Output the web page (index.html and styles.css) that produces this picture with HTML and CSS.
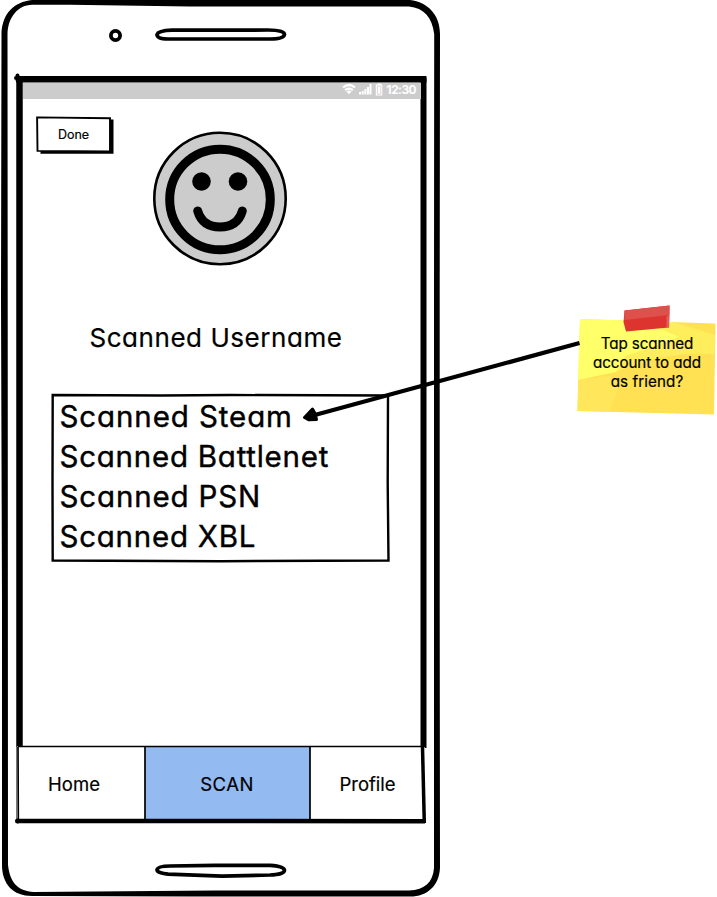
FILE: index.html
```html
<!DOCTYPE html>
<html lang="en">
<head>
<meta charset="utf-8">
<title>Scanned user wireframe</title>
<link rel="stylesheet" href="styles.css">
</head>
<body>
<main class="canvas">
  <section class="phone">
    <svg class="sketch" width="444" height="897" viewBox="0 0 444 897" aria-hidden="true">
      <path fill="#000" fill-rule="evenodd" d="M32 0H410C428 2 440 15 440 34L439.700 300V600L440 868C439 886 427 897 409 896.500H190L32 896C13 896 2 884 2 865V600L1 300L1.500 32C3 13 14 2 32 0ZM32 4.700C18 5 8 17 7.500 34L7.700 300L8 865C10 882 17 891 34 892L215 890.500H409C425 890 433 882 434 868V300L434.200 34C432 17 424 8 409 6.500H190L70 4.800Z"/>
      <ellipse cx="115.500" cy="35.500" rx="4.600" ry="4.600" fill="#fff" stroke="#000" stroke-width="3.800"/>
      <path fill="#fff" stroke="#000" stroke-width="3.700" d="M172 30.200L268 30C280 30 284.500 32 284.500 34.500C284 37.500 279 39 270 39H168C160 39 157 37 157 34.500C158 31.500 164 30.500 172 30.200Z"/>
      <path fill="#fff" stroke="#000" stroke-width="3.700" d="M170 866L215 865.300H270C281 866 284.500 868 284.500 870.500C284 873.500 279 874.500 270 875L222 876.200L168 874.200C160 873 157 872 157 869.500C158 866.500 164 866 170 866Z"/>
      <path fill="none" stroke="#000" stroke-width="6.500" d="M16 79.200H426.500"/>
      <path fill="none" stroke="#000" stroke-width="6.500" d="M19.500 76V748"/>
      <path fill="none" stroke="#000" stroke-width="6" d="M423.500 78V748"/>
      <path fill="none" stroke="#000" stroke-width="4" stroke-linecap="round" d="M17.500 75.500V80M16 78H19"/>
    </svg>
    <div class="screen">
      <div class="status">
        <svg width="42" height="14" viewBox="0 0 42 14" aria-hidden="true">
          <g fill="none" stroke="#fff" stroke-width="2.200"><path d="M1 4.500Q7 -.5 13 4.500M3.200 7.200Q7 4 10.800 7.200"/></g>
          <path fill="#fff" d="M4.500 8.500Q7 6.500 9.500 8.500L7 11.200Z"/>
          <path fill="#fff" d="M17 9h2v2.500h-2zM19.700 8h2v3.500h-2zM22.400 6h2v5.500h-2zM25 4h2v7.500h-2zM27.500 1h2v10.500h-2z"/>
          <path fill="#fff" d="M35.800 .5h3v1h1.500v11h-6.500v-11h2z"/><path fill="none" stroke="#c9b7b5" stroke-width=".6" d="M35.400 3h3.400v8.300h-3.400z"/>
        </svg>
        <span>12:30</span>
      </div>
      <div class="profile">
        <button class="done">
          <svg class="sketch" width="80" height="42" viewBox="0 0 80 42" aria-hidden="true"><path d="M4.500 34.800H75.500V2.500" fill="none" stroke="#000" stroke-width="4"/><path d="M1.100 .4L74 1.200V34.400L1.500 33.900Z" fill="#fff" stroke="#000" stroke-width="1.900"/></svg>
          <span>Done</span>
        </button>
        <svg class="avatar" width="134" height="134" viewBox="0 0 134 134" aria-hidden="true">
          <circle cx="67" cy="66.500" r="65.700" fill="#ccc" stroke="#000" stroke-width="2.600"/>
          <circle cx="67" cy="67.500" r="50.300" fill="none" stroke="#000" stroke-width="9"/>
          <circle cx="48.500" cy="49.500" r="9.300"/><circle cx="85" cy="49.500" r="9.300"/>
          <path d="M44.700 79C48 90 56 95 67 95S86 90 89.300 79" fill="none" stroke="#000" stroke-width="9" stroke-linecap="round"/>
        </svg>
        <h1 class="username">Scanned Username</h1>
        <div class="accounts">
          <svg class="sketch" width="340" height="170" viewBox="0 0 340 170" aria-hidden="true"><path d="M1.700 2L110 2.500L180 2L337 2.500L336.700 90L337.500 167.500L170 168.200L1.700 167.500L1.500 90Z" fill="#fff" stroke="#000" stroke-width="2.400"/></svg>
          <ul>
            <li class="steam">Scanned Steam</li>
            <li>Scanned Battlenet</li>
            <li class="psn">Scanned PSN</li>
            <li>Scanned XBL</li>
          </ul>
        </div>
      </div>
      <nav class="tabs">
        <svg class="sketch" width="412" height="80" viewBox="0 0 412 80" aria-hidden="true">
          <path d="M1 1L129 2V75L1 74Z" fill="#fff"/><path d="M294 2H409V75H294Z" fill="#fff"/>
          <path d="M129 2H294V76H129Z" fill="#94baf2"/>
          <path d="M1.500 1.500H409M129 2V74M294 2V76M2 2L2.300 76" fill="none" stroke="#000" stroke-width="1.700"/>
          <path d="M.5 2V76" fill="none" stroke="#777" stroke-width="1"/>
          <path d="M1 76H130L409 76.300" fill="none" stroke="#000" stroke-width="4.500"/>
          <path d="M406.500 2L408.300 78" fill="none" stroke="#000" stroke-width="3.500"/>
          <circle cx="1.500" cy="76" r="2.500"/>
        </svg>
        <span class="home">Home</span><span class="scan">SCAN</span><span class="me">Profile</span>
      </nav>
    </div>
  </section>
  <aside class="note">
    <svg class="sketch" width="142" height="114" viewBox="0 0 142 114" aria-hidden="true">
      <path d="M5 14L140.500 18.500L139 109.500L2.500 106Z" fill="#ffe153"/>
      <path d="M5 14L98 17L86 24L105 32L75 43L51 51L41 67L3 75Z" fill="#ffff6a"/>
      <path d="M98 17L86 24L105 32L75 43L51 51L41 67Q92 45 139.500 49L140 30Z" fill="#ffee5c"/>
      <path d="M3 75L35 71L45 77L35 106.500L2.500 106Z" fill="#ffe65a"/>
      <path d="M49.500 5.500L94.500 .5L94 22.500L51 26.500L48.500 17Z" fill="#dd3430"/>
      <path d="M49.500 5.500L94.500 .5V10L49.500 15Z" fill="#dd504b"/>
      <path d="M91.500 11L94.500 10.500L94 22.500L91.500 22Z" fill="#e75a55"/>
    </svg>
    <p><span class="n1">Tap scanned</span><br><span class="n2">account to add</span><br><span class="n3">as friend?</span></p>
  </aside>
  <svg class="arrow" width="282" height="84" viewBox="0 0 282 84" aria-hidden="true">
    <path d="M279.500 3L13 75.500" fill="none" stroke="#000" stroke-width="4.200"/>
    <path d="M4.500 77.500L12.500 69L14.800 73L16.500 79.500L9 79.800Z" stroke="#000" stroke-width="3" stroke-linejoin="round"/>
  </svg>
</main>
</body>
</html>
```

FILE: styles.css
```css
* { box-sizing: border-box; }
body { margin: 0; background: #fff; }
svg { overflow: visible; }
.canvas {
  position: relative;
  display: flex;
  align-items: flex-start;
  width: 717px;
  height: 897px;
  overflow: hidden;
  color: #000;
  font-family: Inter, "Open Sans", sans-serif;
  font-feature-settings: "cv11" 1, "calt" 0;
  -webkit-text-stroke: .2px currentColor;
}
.sketch { position: absolute; left: 0; top: 0; z-index: -1; }
.phone { position: relative; z-index: 0; width: 444px; height: 897px; padding: 83px 0 0 16px; }
.screen { display: flex; flex-direction: column; width: 412px; height: 742px; }
.status {
  display: flex;
  align-items: flex-start;
  justify-content: flex-end;
  gap: 3px;
  height: 16px;
  margin: 0 7.500px 0 7px;
  padding-right: 4.500px;
  background: #ccc;
  color: #fff;
  font-size: 12px;
  line-height: 14px;
  font-weight: 600;
  letter-spacing: -.5px;
}
.profile { flex: 1; display: flex; flex-direction: column; align-items: center; }
.done {
  position: relative;
  z-index: 0;
  align-self: flex-start;
  width: 80px;
  height: 42px;
  margin: 18px 0 -27px 20px;
  padding: 0 5px 7px 0;
  border: 0;
  background: none;
  color: inherit;
  font: inherit;
  font-size: 12.500px;
  line-height: 20px;
  text-align: center;
}
.avatar { display: block; margin-left: -4px; }
.username {
  margin: 52px 12px 0 0;
  font-size: 26px;
  line-height: 40px;
  font-weight: 400;
  letter-spacing: .55px;
  white-space: nowrap;
}
.accounts { position: relative; z-index: 0; align-self: flex-start; width: 340px; height: 170px; margin: 35px 0 0 35px; }
.accounts ul {
  margin: 0;
  padding: 3px 0 0 8.500px;
  list-style: none;
  font-size: 29.500px;
  line-height: 40px;
  letter-spacing: .75px;
  white-space: nowrap;
  -webkit-text-stroke: .4px currentColor;
}
.steam { letter-spacing: .9px; }
.psn { letter-spacing: .85px; }
.tabs {
  position: relative;
  z-index: 0;
  display: grid;
  grid-template-columns: 129px 165px 118px;
  height: 80px;
  font-size: 18.500px;
  line-height: 78px;
  text-align: center;
}
.tabs span { white-space: nowrap; }
.home { padding-right: 13px; }
.scan { padding-right: 1px; letter-spacing: .5px; }
.me { padding-right: 3px; }
.note {
  position: relative;
  z-index: 0;
  width: 142px;
  height: 114px;
  margin: 305px 0 0 131px;
  padding: 29px 0 0 2px;
  text-align: center;
  font-size: 15.200px;
  line-height: 19px;
}
.note p { margin: 0; white-space: nowrap; }
.n1, .n2 { letter-spacing: -.08px; }
.n3 { letter-spacing: .1px; }
.arrow { position: absolute; left: 300px; top: 340px; }
```
